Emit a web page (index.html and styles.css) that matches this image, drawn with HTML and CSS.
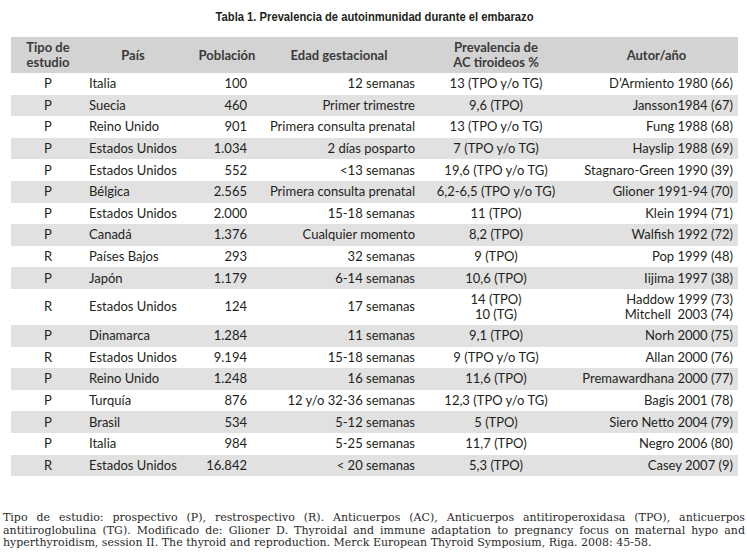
FILE: index.html
```html
<!DOCTYPE html>
<html lang="es">
<head>
<meta charset="utf-8">
<title>Tabla 1</title>
<link rel="stylesheet" href="styles.css">
</head>
<body>
<h1 class="title"><span class="title-text">Tabla 1. Prevalencia de autoinmunidad durante el embarazo</span></h1>
<table class="data">
  <colgroup>
    <col class="c1"><col class="c2"><col class="c3"><col class="c4"><col class="c5"><col class="c6">
  </colgroup>
  <thead>
    <tr>
      <th class="h1">Tipo de<br>estudio</th>
      <th class="h2">País</th>
      <th class="h3">Población</th>
      <th class="h4">Edad gestacional</th>
      <th class="h5">Prevalencia de<br>AC tiroideos %</th>
      <th class="h6">Autor/año</th>
    </tr>
  </thead>
  <tbody>
    <tr><td class="t">P</td><td class="p">Italia</td><td class="n">100</td><td class="e">12 semanas</td><td class="v">13 (TPO y/o TG)</td><td class="a">D’Armiento 1980 (66)</td></tr>
    <tr><td class="t">P</td><td class="p">Suecia</td><td class="n">460</td><td class="e">Primer trimestre</td><td class="v">9,6 (TPO)</td><td class="a">Jansson1984 (67)</td></tr>
    <tr><td class="t">P</td><td class="p">Reino Unido</td><td class="n">901</td><td class="e">Primera consulta prenatal</td><td class="v">13 (TPO y/o TG)</td><td class="a">Fung 1988 (68)</td></tr>
    <tr><td class="t">P</td><td class="p">Estados Unidos</td><td class="n">1.034</td><td class="e">2 días posparto</td><td class="v">7 (TPO y/o TG)</td><td class="a">Hayslip 1988 (69)</td></tr>
    <tr><td class="t">P</td><td class="p">Estados Unidos</td><td class="n">552</td><td class="e">&lt;13 semanas</td><td class="v">19,6 (TPO y/o TG)</td><td class="a">Stagnaro-Green 1990 (39)</td></tr>
    <tr><td class="t">P</td><td class="p">Bélgica</td><td class="n">2.565</td><td class="e">Primera consulta prenatal</td><td class="v">6,2-6,5 (TPO y/o TG)</td><td class="a">Glioner 1991-94 (70)</td></tr>
    <tr><td class="t">P</td><td class="p">Estados Unidos</td><td class="n">2.000</td><td class="e">15-18 semanas</td><td class="v">11 (TPO)</td><td class="a">Klein 1994 (71)</td></tr>
    <tr><td class="t">P</td><td class="p">Canadá</td><td class="n">1.376</td><td class="e">Cualquier momento</td><td class="v">8,2 (TPO)</td><td class="a">Walfish 1992 (72)</td></tr>
    <tr><td class="t">R</td><td class="p">Países Bajos</td><td class="n">293</td><td class="e">32 semanas</td><td class="v">9 (TPO)</td><td class="a">Pop 1999 (48)</td></tr>
    <tr><td class="t">P</td><td class="p">Japón</td><td class="n">1.179</td><td class="e">6-14 semanas</td><td class="v">10,6 (TPO)</td><td class="a">Iijima 1997 (38)</td></tr>
    <tr class="double"><td class="t">R</td><td class="p">Estados Unidos</td><td class="n">124</td><td class="e">17 semanas</td><td class="v">14 (TPO)<br>10 (TG)</td><td class="a">Haddow 1999 (73)<br>Mitchell&nbsp; 2003 (74)</td></tr>
    <tr><td class="t">P</td><td class="p">Dinamarca</td><td class="n">1.284</td><td class="e">11 semanas</td><td class="v">9,1 (TPO)</td><td class="a">Norh 2000 (75)</td></tr>
    <tr><td class="t">R</td><td class="p">Estados Unidos</td><td class="n">9.194</td><td class="e">15-18 semanas</td><td class="v">9 (TPO y/o TG)</td><td class="a">Allan 2000 (76)</td></tr>
    <tr><td class="t">P</td><td class="p">Reino Unido</td><td class="n">1.248</td><td class="e">16 semanas</td><td class="v">11,6 (TPO)</td><td class="a">Premawardhana 2000 (77)</td></tr>
    <tr><td class="t">P</td><td class="p">Turquía</td><td class="n">876</td><td class="e">12 y/o 32-36 semanas</td><td class="v">12,3 (TPO y/o TG)</td><td class="a">Bagis 2001 (78)</td></tr>
    <tr><td class="t">P</td><td class="p">Brasil</td><td class="n">534</td><td class="e">5-12 semanas</td><td class="v">5 (TPO)</td><td class="a">Siero Netto 2004 (79)</td></tr>
    <tr><td class="t">P</td><td class="p">Italia</td><td class="n">984</td><td class="e">5-25 semanas</td><td class="v">11,7 (TPO)</td><td class="a">Negro 2006 (80)</td></tr>
    <tr><td class="t">R</td><td class="p">Estados Unidos</td><td class="n">16.842</td><td class="e">&lt; 20 semanas</td><td class="v">5,3 (TPO)</td><td class="a">Casey 2007 (9)</td></tr>
  </tbody>
</table>
<div class="note">
  <span class="line">Tipo de estudio: prospectivo (P), restrospectivo (R). Anticuerpos (AC), Anticuerpos antitiroperoxidasa (TPO), anticuerpos</span>
  <span class="line">antitiroglobulina (TG). Modificado de: Glioner D. Thyroidal and immune adaptation to pregnancy focus on maternal hypo and</span>
  <span class="line last">hyperthyroidism, session II. The thyroid and reproduction. Merck European Thyroid Symposium, Riga. 2008: 45-58.</span>
</div>
</body>
</html>
```

FILE: styles.css
```css
html, body {
  margin: 0;
  padding: 0;
  background: #ffffff;
}

body {
  width: 747px;
  color: #231f20;
  font-family: Lato, "Open Sans", sans-serif;
}

.title {
  margin: 0;
  padding-top: 10px;
  height: 27px;
  box-sizing: border-box;
  text-align: center;
  font-family: "Liberation Sans", Arial, sans-serif;
  font-weight: bold;
  font-size: 13.5px;
  line-height: 14px;
  color: #231f20;
  padding-left: 3px;
}

.title-text {
  display: inline-block;
  transform: scaleX(0.83);
  transform-origin: center;
  white-space: nowrap;
}

.data {
  margin-top: 10px;
  margin-left: 11px;
  width: 727px;
  border-collapse: collapse;
  table-layout: fixed;
  font-size: 13px;
}

.c1 { width: 74px; }
.c2 { width: 96px; }
.c3 { width: 84px; }
.c4 { width: 152px; }
.c5 { width: 158px; }
.c6 { width: 163px; }

.data th {
  background: #d3d3d3;
  height: 36px;
  padding: 0;
  font-weight: bold;
  font-size: 13px;
  line-height: 15px;
  color: #3a3a3a;
  text-align: center;
  vertical-align: middle;
}

.data th.h3 { padding-left: 8px; }
.data th.h4 { padding-right: 4px; }

.data td {
  height: 21.6px;
  padding: 0;
  line-height: 15px;
  vertical-align: middle;
  white-space: nowrap;
}

.data tbody tr:nth-child(even) td {
  background: #e1e1e1;
}

.data tr.double td {
  height: 36px;
  line-height: 15px;
}

.t { text-align: center; }
.p { text-align: left; padding-left: 4px !important; }
.n { text-align: right; padding-right: 18px !important; }
.e { text-align: right; padding-right: 2px !important; }
.v { text-align: center; }
.a { text-align: right; padding-right: 5px !important; }

.note {
  margin-top: 36px;
  padding: 0 2px 0 3px;
  font-family: "DejaVu Serif", "Liberation Serif", serif;
  font-size: 11px;
  line-height: 12.5px;
  color: #2a2a2a;
}

.line {
  display: block;
  text-align: justify;
  text-align-last: justify;
  white-space: nowrap;
}

.line.last {
  text-align: left;
  text-align-last: left;
}
```
